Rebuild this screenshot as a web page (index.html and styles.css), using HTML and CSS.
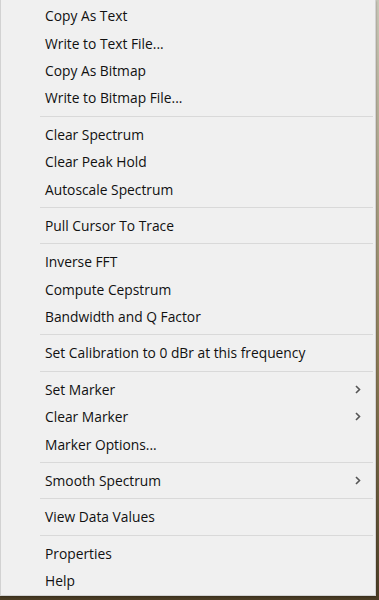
FILE: index.html
```html
<!DOCTYPE html>
<html lang="en">
<head>
    <meta charset="UTF-8" />
    <meta name="viewport" content="width=device-width, initial-scale=1" />
    <title>Spectrum context menu</title>
    <link rel="stylesheet" href="styles.css">
</head>
<body>
    <ul class="menu">
        <li class="item">Copy As Text</li>
        <li class="item">Write to Text File...</li>
        <li class="item">Copy As Bitmap</li>
        <li class="item">Write to Bitmap File...</li>
        <li class="sep"></li>
        <li class="item">Clear Spectrum</li>
        <li class="item">Clear Peak Hold</li>
        <li class="item">Autoscale Spectrum</li>
        <li class="sep"></li>
        <li class="item">Pull Cursor To Trace</li>
        <li class="sep"></li>
        <li class="item">Inverse FFT</li>
        <li class="item">Compute Cepstrum</li>
        <li class="item">Bandwidth and Q Factor</li>
        <li class="sep"></li>
        <li class="item">Set Calibration to 0 dBr at this frequency</li>
        <li class="sep"></li>
        <li class="item has-sub">Set Marker
            <svg class="chev" width="6" height="9" viewBox="0 0 6 9"><path d="M1 1 L4.5 4.5 L1 8" /></svg>
        </li>
        <li class="item has-sub">Clear Marker
            <svg class="chev" width="6" height="9" viewBox="0 0 6 9"><path d="M1 1 L4.5 4.5 L1 8" /></svg>
        </li>
        <li class="item">Marker Options...</li>
        <li class="sep"></li>
        <li class="item has-sub">Smooth Spectrum
            <svg class="chev" width="6" height="9" viewBox="0 0 6 9"><path d="M1 1 L4.5 4.5 L1 8" /></svg>
        </li>
        <li class="sep"></li>
        <li class="item">View Data Values</li>
        <li class="sep"></li>
        <li class="item">Properties</li>
        <li class="item">Help</li>
    </ul>
</body>
</html>
```

FILE: styles.css
```css
* {
    box-sizing: border-box;
}

body {
    margin: 0;
    padding: 0;
    width: 379px;
    height: 600px;
    overflow: hidden;
    background: linear-gradient(#c9c7b8, #8a7a55 60%, #4a3c24);
    font-family: "Open Sans", "Noto Sans", sans-serif;
}

.menu {
    list-style: none;
    margin: 0;
    padding: 2px 0 2px 0;
    width: 376px;
    height: 596px;
    background-color: #f0f0f0;
    border: 1px solid #d2d2d2;
    border-top: none;
    box-shadow: 0 1px 2px rgba(0, 0, 0, 0.3);
}

.item {
    height: 27.4px;
    display: flex;
    align-items: center;
    justify-content: space-between;
    padding: 0 14px 0 44px;
    font-size: 13.8px;
    color: #111;
    white-space: nowrap;
}

.sep {
    height: 1px;
    margin: 4px 2px 4px 39px;
    background-color: #d9d9d9;
}

.chev {
    fill: none;
    stroke: #555;
    stroke-width: 1.6;
}
```
